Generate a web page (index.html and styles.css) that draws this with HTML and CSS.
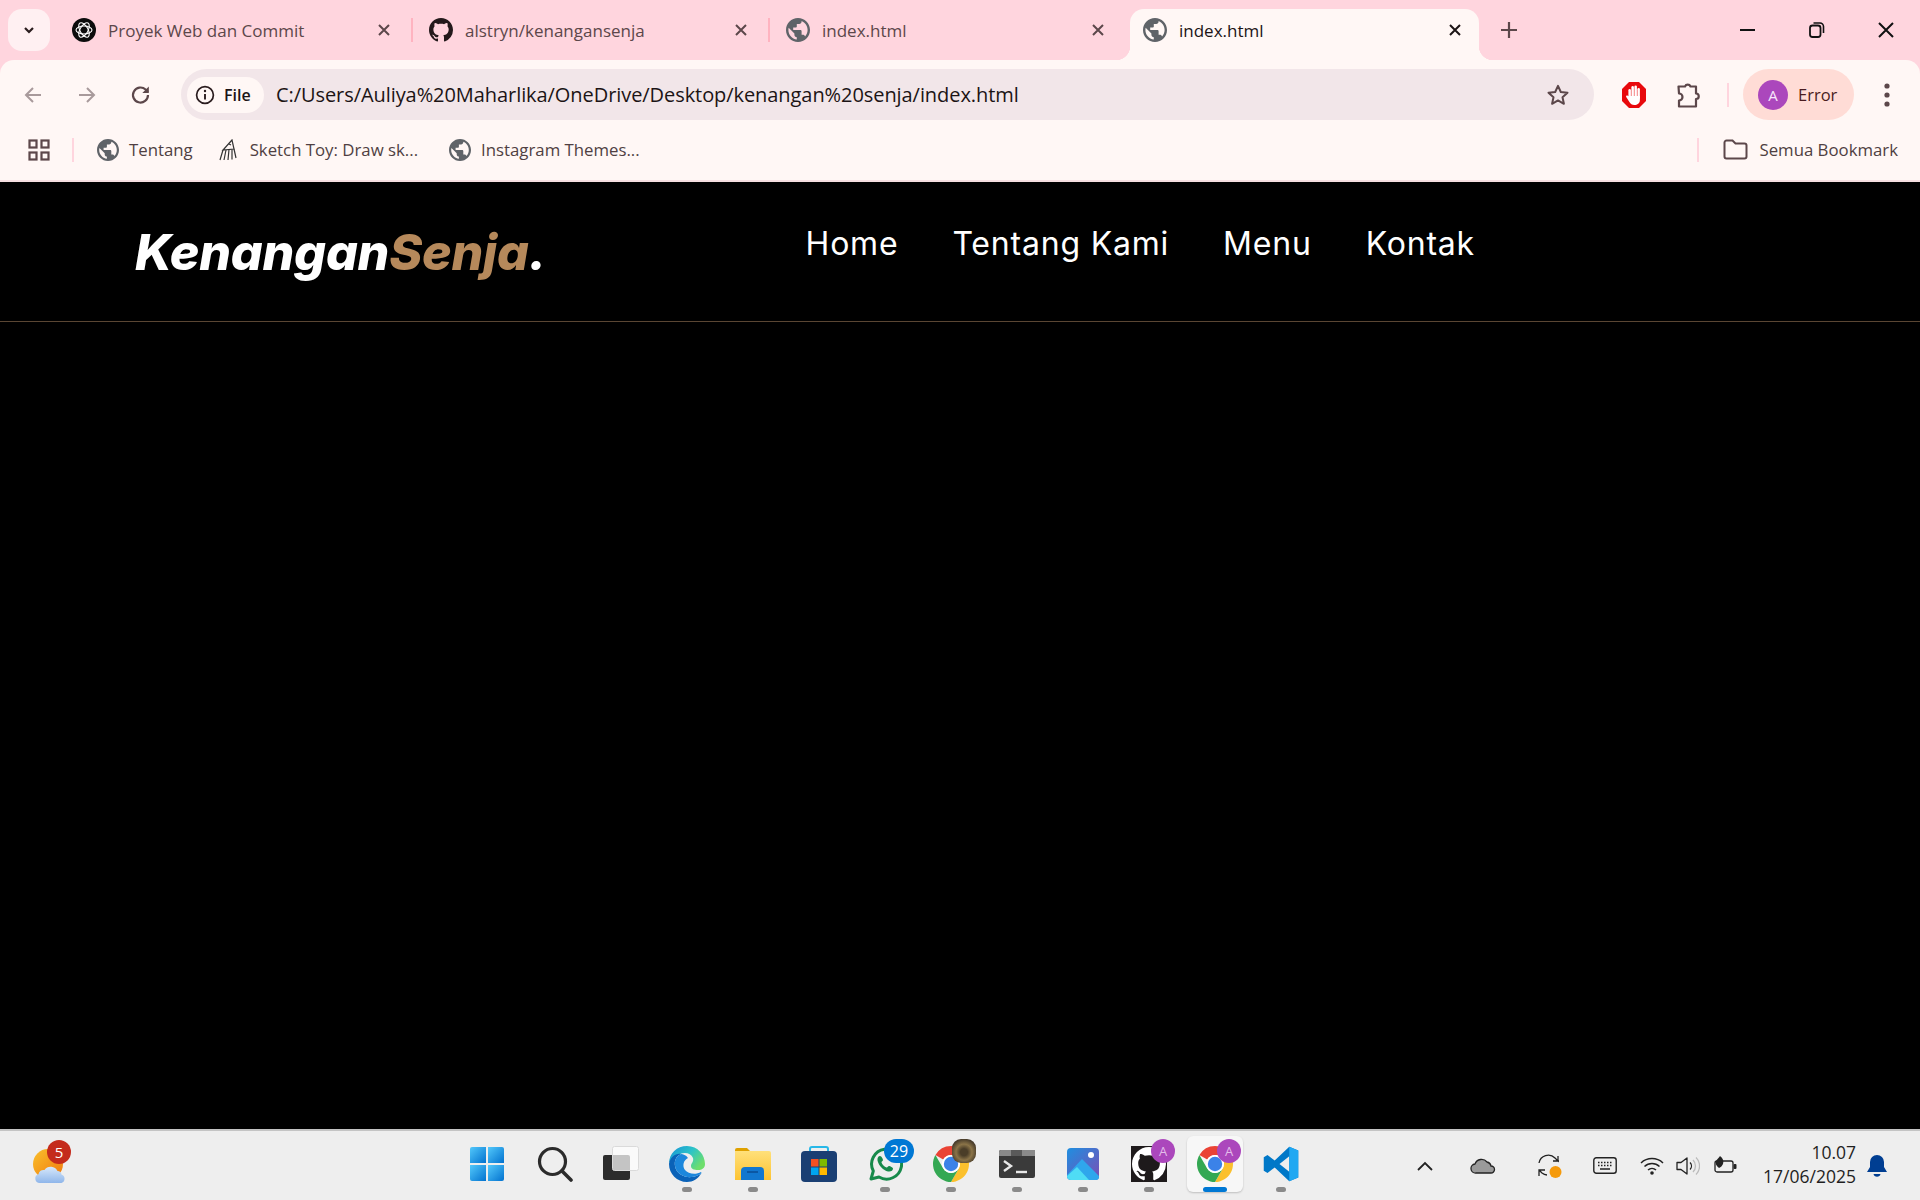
FILE: index.html
```html
<!DOCTYPE html>
<html lang="en">
<head>
  <meta charset="UTF-8">
  <title>Kenangan Senja</title>
  <link rel="stylesheet" href="styles.css">
</head>
<body>
  <svg class="defs" width="0" height="0">
    <defs>
      <symbol id="globe" viewBox="2 2 20 20"><path fill="#5f6368" d="M12 2C6.48 2 2 6.48 2 12s4.48 10 10 10 10-4.48 10-10S17.52 2 12 2zm-1 17.93c-3.95-.49-7-3.85-7-7.93 0-.62.08-1.21.21-1.79L9 15v1c0 1.1.9 2 2 2v1.93zm6.9-2.54c-.26-.81-1-1.39-1.9-1.39h-1v-3c0-.55-.45-1-1-1H8v-2h2c.55 0 1-.45 1-1V7h2c1.1 0 2-.9 2-2v-.41c2.93 1.19 5 4.06 5 7.41 0 2.08-.8 3.97-2.1 5.39z"/></symbol>
      <symbol id="octocat" viewBox="0 0 16 16"><path fill-rule="evenodd" d="M8 0C3.58 0 0 3.58 0 8c0 3.54 2.29 6.53 5.47 7.59.4.07.55-.17.55-.38 0-.19-.01-.82-.01-1.49-2.01.37-2.53-.49-2.69-.94-.09-.23-.48-.94-.82-1.13-.28-.15-.68-.52-.01-.53.63-.01 1.08.58 1.23.82.72 1.21 1.87.87 2.33.66.07-.52.28-.87.51-1.07-1.78-.2-3.64-.89-3.64-3.95 0-.87.31-1.59.82-2.15-.08-.2-.36-1.02.08-2.12 0 0 .67-.21 2.2.82.64-.18 1.32-.27 2-.27.68 0 1.36.09 2 .27 1.53-1.04 2.2-.82 2.2-.82.44 1.1.16 1.92.08 2.12.51.56.82 1.27.82 2.15 0 3.07-1.87 3.75-3.65 3.95.29.25.54.73.54 1.48 0 1.07-.01 1.93-.01 2.2 0 .21.15.46.55.38A8.013 8.013 0 0016 8c0-4.42-3.58-8-8-8z"/></symbol>
      <symbol id="closex" viewBox="0 0 14 14"><path d="M2 2l10 10M12 2L2 12" fill="none" stroke="currentColor" stroke-width="2"/></symbol>
      <symbol id="chrome" viewBox="2 2 20 20">
        <path fill="#ea4335" d="M12 2A10 10 0 0 1 20.66 7H12A5 5 0 0 0 7.67 9.5L3.34 7A10 10 0 0 1 12 2Z"/>
        <path fill="#fbc02d" d="M20.66 7A10 10 0 0 1 12 22L16.33 14.5A5 5 0 0 0 12 7Z"/>
        <path fill="#34a853" d="M12 22A10 10 0 0 1 3.34 7L7.67 14.5A5 5 0 0 0 16.33 14.5Z"/>
        <circle cx="12" cy="12" r="5" fill="#fff"/>
        <circle cx="12" cy="12" r="4" fill="#3b82e8"/>
      </symbol>
      <linearGradient id="winG" x1="0" y1="0" x2="1" y2="1"><stop offset="0" stop-color="#52c8fb"/><stop offset="1" stop-color="#0272cf"/></linearGradient>
      <linearGradient id="edgeG" x1="0" y1="0" x2="1" y2="0.6"><stop offset="0" stop-color="#1590d8"/><stop offset=".55" stop-color="#2cc3c8"/><stop offset="1" stop-color="#6ede6c"/></linearGradient>
      <linearGradient id="folderG" x1="0" y1="0" x2="0" y2="1"><stop offset="0" stop-color="#ffe07a"/><stop offset="1" stop-color="#fdc332"/></linearGradient>
      <linearGradient id="photoG" x1="0" y1="0" x2="1" y2="1"><stop offset="0" stop-color="#1f8fe0"/><stop offset="1" stop-color="#7a4db5"/></linearGradient>
      <linearGradient id="sunG" x1="0" y1="0" x2="1" y2="1"><stop offset="0" stop-color="#f9c02c"/><stop offset="1" stop-color="#f0780e"/></linearGradient>
      <linearGradient id="cloudG" x1="0" y1="0" x2="0" y2="1"><stop offset="0" stop-color="#d7e8fb"/><stop offset="1" stop-color="#8fb6ea"/></linearGradient>
    </defs>
  </svg>

  <header class="browser">
    <div class="tabstrip">
      <button class="tab-menu">
        <svg width="14" height="14" viewBox="0 0 14 14"><path d="M3 5l4 4 4-4" fill="none" stroke="#2a1c1e" stroke-width="2.2"/></svg>
      </button>
      <div class="tab">
        <svg class="favicon" viewBox="0 0 24 24">
          <circle cx="12" cy="12" r="12" fill="#0c0c0c"/>
          <g fill="none" stroke="#fff" stroke-width="1.1">
            <ellipse cx="12" cy="12" rx="8" ry="4"/>
            <ellipse cx="12" cy="12" rx="8" ry="4" transform="rotate(60 12 12)"/>
            <ellipse cx="12" cy="12" rx="8" ry="4" transform="rotate(120 12 12)"/>
          </g>
        </svg>
        <span class="tab-title">Proyek Web dan Commit</span>
        <svg class="tab-close"><use href="#closex"/></svg>
      </div>
      <span class="tab-sep"></span>
      <div class="tab">
        <svg class="favicon octo"><use href="#octocat"/></svg>
        <span class="tab-title">alstryn/kenangansenja</span>
        <svg class="tab-close"><use href="#closex"/></svg>
      </div>
      <span class="tab-sep"></span>
      <div class="tab">
        <svg class="favicon"><use href="#globe"/></svg>
        <span class="tab-title">index.html</span>
        <svg class="tab-close"><use href="#closex"/></svg>
      </div>
      <span class="tab-sep off"></span>
      <div class="tab active">
        <svg class="favicon"><use href="#globe"/></svg>
        <span class="tab-title">index.html</span>
        <svg class="tab-close"><use href="#closex"/></svg>
      </div>
      <svg class="new-tab" width="20" height="20" viewBox="0 0 20 20"><path d="M10 2v16M2 10h16" stroke="#5c474a" stroke-width="2.2"/></svg>
      <div class="win-controls">
        <svg width="18" height="18" viewBox="0 0 18 18"><path d="M1 9h15" stroke="#111" stroke-width="2"/></svg>
        <svg width="18" height="18" viewBox="0 0 18 18"><rect x="2" y="4.5" width="10.5" height="11.5" rx="2.5" fill="none" stroke="#111" stroke-width="1.8"/><path d="M5.5 2h6.5a3.5 3.5 0 0 1 3.5 3.5V12" fill="none" stroke="#111" stroke-width="1.6"/></svg>
        <svg width="18" height="18" viewBox="0 0 18 18"><path d="M2 2l14 14M16 2L2 16" stroke="#111" stroke-width="2"/></svg>
      </div>
    </div>

    <div class="toolbar">
      <div class="slot"><svg width="20" height="20" viewBox="0 0 20 20"><path d="M18 10H3M10 3l-7 7 7 7" fill="none" stroke="#a89a9b" stroke-width="2"/></svg></div>
      <div class="slot"><svg width="20" height="20" viewBox="0 0 20 20"><path d="M2 10h15M10 3l7 7-7 7" fill="none" stroke="#a89a9b" stroke-width="2"/></svg></div>
      <div class="slot"><svg width="22" height="22" viewBox="0 0 22 22"><path d="M18 11a7.5 7.5 0 1 1-2.4-5.5L18 8" fill="none" stroke="#5c474a" stroke-width="2.2"/><path d="M18.8 2.5V9h-6.5z" fill="#5c474a"/></svg></div>
      <div class="omnibox">
        <div class="chip">
          <svg width="20" height="20" viewBox="0 0 20 20"><circle cx="10" cy="10" r="8.4" fill="none" stroke="#2a1c1e" stroke-width="1.7"/><path d="M10 9v5.5" stroke="#2a1c1e" stroke-width="1.9"/><circle cx="10" cy="6" r="1.2" fill="#2a1c1e"/></svg>
          <span>File</span>
        </div>
        <span class="url">C:/Users/Auliya%20Maharlika/OneDrive/Desktop/kenangan%20senja/index.html</span>
        <svg class="star" width="24" height="24" viewBox="0 0 24 24"><path d="M12 2.8l2.8 6.2 6.7.7-5 4.5 1.4 6.6-5.9-3.4-5.9 3.4 1.4-6.6-5-4.5 6.7-.7z" fill="none" stroke="#5c474a" stroke-width="2" stroke-linejoin="round"/></svg>
      </div>
      <div class="slot first">
        <svg width="26" height="28" viewBox="0 0 26 28">
          <path d="M8 1h10l7 7v12l-7 7H8l-7-7V8z" fill="#e8090c"/>
          <g fill="#fff">
            <rect x="7.400" y="8" width="2.500" height="10" rx="1.250"/>
            <rect x="10.400" y="5" width="2.500" height="12" rx="1.250"/>
            <rect x="13.400" y="4.500" width="2.500" height="12" rx="1.250"/>
            <rect x="16.400" y="7" width="2.500" height="11" rx="1.250"/>
            <path d="M7.400 15h11.500v4c0 3.500-2.500 5-5.500 5-2.500 0-3.800-1-5-3l-3.200-5c-.6-1.100.9-2 1.800-1l.4.500z"/>
          </g>
        </svg>
      </div>
      <div class="slot">
        <svg width="24" height="28" viewBox="0 0 24 28"><path d="M2.500 5.500H9a3 3 0 0 1 5.500 0h5.500v7a2.600 2.600 0 0 1 0 5.500v7.500H3v-6a3.500 3.500 0 0 0 0-7z" fill="none" stroke="#5c474a" stroke-width="2.200" stroke-linejoin="round"/></svg>
      </div>
      <span class="tool-sep"></span>
      <div class="profile">
        <span class="avatar">A</span>
        <span class="profile-name">Error</span>
      </div>
      <div class="slot menu-dots">
        <svg width="6" height="26" viewBox="0 0 6 26"><circle cx="3" cy="4" r="2.600" fill="#5c474a"/><circle cx="3" cy="13" r="2.600" fill="#5c474a"/><circle cx="3" cy="22" r="2.600" fill="#5c474a"/></svg>
      </div>
    </div>

    <div class="bookmarks">
      <svg class="apps" width="22" height="22" viewBox="0 0 22 22"><g fill="none" stroke="#5c474a" stroke-width="2.200"><rect x="1.500" y="1.500" width="7" height="7"/><rect x="13.500" y="1.500" width="7" height="7"/><rect x="1.500" y="13.500" width="7" height="7"/><rect x="13.500" y="13.500" width="7" height="7"/></g></svg>
      <span class="bm-sep"></span>
      <a class="bm"><svg class="bm-icon"><use href="#globe"/></svg><span>Tentang</span></a>
      <a class="bm"><svg class="bm-icon" viewBox="0 0 22 22"><g fill="none" stroke="#333" stroke-width="1.200"><path d="M14 1l-9 10 11-1z"/><path d="M11 5l2 1"/><path d="M5 11l-3 10M8 11l-2 10M11 10.500l-1 10.500M14 10.500l0 10M16 10l2 9"/></g></svg><span>Sketch Toy: Draw sk...</span></a>
      <a class="bm"><svg class="bm-icon"><use href="#globe"/></svg><span>Instagram Themes...</span></a>
      <span class="bm-sep right"></span>
      <a class="bm all"><svg width="25" height="21" viewBox="0 0 25 21"><path d="M1.500 3.500a2 2 0 0 1 2-2h6l3 3h9a2 2 0 0 1 2 2v11a2 2 0 0 1-2 2h-18a2 2 0 0 1-2-2z" fill="none" stroke="#5c474a" stroke-width="2"/></svg><span>Semua Bookmark</span></a>
    </div>
  </header>

  <main class="page">
    <nav class="navbar">
      <a class="navbar-logo">Kenangan<span>Senja</span>.</a>
      <div class="navbar-nav">
        <a>Home</a>
        <a>Tentang Kami</a>
        <a>Menu</a>
        <a>Kontak</a>
      </div>
    </nav>
  </main>

  <footer class="taskbar">
    <div class="widgets">
      <div class="weather">
        <svg width="40" height="40" viewBox="0 0 40 40">
          <circle cx="18" cy="18" r="15" fill="url(#sunG)"/>
          <path d="M10 37a4.500 4.500 0 0 1-1.500-8.800 5 5 0 0 1 6-4.200 7.500 7.500 0 0 1 13 1 4 4 0 0 1 4 3.500 4.500 4.500 0 0 1 0 8.500z" fill="url(#cloudG)"/>
        </svg>
        <span class="badge red">5</span>
      </div>
    </div>
    <div class="apps-row">
      <div class="app start">
        <svg width="36" height="36" viewBox="0 0 36 36"><g fill="url(#winG)"><path d="M1 3a2 2 0 0 1 2-2h14v16H1z"/><path d="M19 1h14a2 2 0 0 1 2 2v14H19z"/><path d="M1 19h16v16H3a2 2 0 0 1-2-2z"/><path d="M19 19h16v14a2 2 0 0 1-2 2H19z"/></g></svg>
      </div>
      <div class="app">
        <svg width="36" height="36" viewBox="0 0 36 36"><circle cx="15.500" cy="15.500" r="13" fill="none" stroke="#2b2b2b" stroke-width="3.200"/><path d="M25 25l9 9" stroke="#2b2b2b" stroke-width="3.600" stroke-linecap="round"/></svg>
      </div>
      <div class="app">
        <svg width="36" height="36" viewBox="0 0 36 36"><rect x="0" y="9" width="27" height="25" rx="2" fill="#2c2c2c"/><rect x="9.500" y="0.500" width="26" height="24" rx="2" fill="#fff" fill-opacity=".72" stroke="#dadada"/></svg>
      </div>
      <div class="app running">
        <svg width="38" height="38" viewBox="0 0 38 38">
          <path d="M1 19C1 8 9 1 19 1C30 1 37 10 37 19C37 23 34 25 30 25C26 25 23 24 23 21C23 18 26 17 25 13C23 8 17 7 12 9C6 12 2 15 1 19Z" fill="url(#edgeG)"/>
          <path d="M1 19C2 12 8 8 13 9C8 11 6 16 7 21C8 29 17 33 24 32C28 31.500 31 30 33.500 28C30 34 25 37 19 37C9 37 1 29 1 19Z" fill="#0a62b8"/>
          <path d="M13 9C8 11 6 16 7 21C8 29 17 33 24 32C28 31.500 31 30 33.500 28L33 27C28 30 20 29 17 25C14 21 15.500 15 20 13C18 10 15 9 13 9Z" fill="#1c87dc"/>
        </svg>
      </div>
      <div class="app running">
        <svg width="36" height="34" viewBox="0 0 36 34">
          <path d="M0 3a2 2 0 0 1 2-2h10l3 3H0z" fill="#dfa100"/>
          <path d="M0 4h34a2 2 0 0 1 2 2v27H0z" fill="url(#folderG)"/>
          <path d="M6 33v-9a4 4 0 0 1 4-4h15a4 4 0 0 1 4 4v9z" fill="#1277cf"/>
          <path d="M12 25h11" stroke="#0a4f98" stroke-width="1.600"/>
        </svg>
      </div>
      <div class="app">
        <svg width="36" height="36" viewBox="0 0 36 36">
          <path d="M9 7V3a2 2 0 0 1 2-2h14a2 2 0 0 1 2 2v4" fill="none" stroke="#27b8e8" stroke-width="2"/>
          <rect x="0" y="5" width="36" height="31" rx="4" fill="#1a3f73"/>
          <rect x="10" y="13" width="7.500" height="7.500" fill="#f25022"/>
          <rect x="18.500" y="13" width="7.500" height="7.500" fill="#7fba00"/>
          <rect x="10" y="21.500" width="7.500" height="7.500" fill="#00a4ef"/>
          <rect x="18.500" y="21.500" width="7.500" height="7.500" fill="#ffb900"/>
        </svg>
      </div>
      <div class="app running">
        <svg width="36" height="36" viewBox="0 0 36 36">
          <path d="M4 33l2.300-8A15 15 0 1 1 12 31z" fill="none" stroke="#178a4b" stroke-width="3" stroke-linejoin="round"/>
          <path d="M13 10c-1.500 0-3 2-2.500 4.500 1 5 6 10 10.500 11 3 .5 5-1 5-3 0-1-3-2.500-4-2.500-1 0-1.500 1.700-2.500 1.500-2-.5-4.500-3-5-5-.2-1 1.500-1.500 1.500-2.500 0-1-1.500-4-3-4z" fill="#178a4b"/>
        </svg>
        <span class="badge blue">29</span>
      </div>
      <div class="app running">
        <svg class="chrome-icon"><use href="#chrome"/></svg>
        <span class="badge photo"></span>
      </div>
      <div class="app running">
        <svg width="36" height="28" viewBox="0 0 36 28">
          <rect width="36" height="28" rx="2" fill="#3a3a3a"/>
          <path d="M0 2a2 2 0 0 1 2-2h34v6H0z" fill="#8a8a8a"/>
          <path d="M12 0h11v6H12z" fill="#5a5a5a"/>
          <path d="M5 11l7 5-7 5" fill="none" stroke="#e8e8e8" stroke-width="2.400"/>
          <path d="M17 22h11" stroke="#e8e8e8" stroke-width="2.400"/>
        </svg>
      </div>
      <div class="app running">
        <svg width="32" height="32" viewBox="0 0 32 32">
          <rect width="32" height="32" rx="4" fill="url(#photoG)"/>
          <circle cx="24" cy="7" r="3" fill="#fff"/>
          <path d="M0 27L15 11l17 17v1a3 3 0 0 1-3 3H5a5 5 0 0 1-5-5z" fill="#2fa6ec"/>
          <path d="M0 28l10-9 12 13H4a4 4 0 0 1-4-4z" fill="#4fdcf5"/>
        </svg>
      </div>
      <div class="app running">
        <span class="gh-tile"><svg class="gh-cat"><use href="#octocat"/></svg></span>
        <span class="badge avatar-badge">A</span>
      </div>
      <div class="app active">
        <svg class="chrome-icon"><use href="#chrome"/></svg>
        <span class="badge avatar-badge">A</span>
      </div>
      <div class="app running">
        <svg width="36" height="36" viewBox="0 0 24 24">
          <path fill-rule="evenodd" fill="#0078c8" d="M17.500 .5L23.500 3V21L17.500 23.500 7.800 14.300 3 18 .5 16.500V7.500L3 6 7.800 9.700ZM17.500 6.800L11 12 17.500 17.200Z"/>
          <path d="M17.500 .5L23.500 3V21L17.500 23.500Z" fill="#20a8f2"/>
        </svg>
      </div>
    </div>
    <div class="tray">
      <svg class="tray-item chevron" width="16" height="10" viewBox="0 0 16 10"><path d="M1 9l7-7 7 7" fill="none" stroke="#222" stroke-width="1.800"/></svg>
      <svg class="tray-item cloud" width="26" height="16" viewBox="0 0 26 16"><path d="M6 15a4.500 4.500 0 0 1-1-9 7 7 0 0 1 12-2 5 5 0 0 1 4 4 3.500 3.500 0 0 1 0 7z" fill="#9a9a9a" stroke="#222" stroke-width="1.300"/></svg>
      <span class="tray-item sync">
        <svg width="26" height="26" viewBox="0 0 26 26"><path d="M3 10a9.500 9.500 0 0 1 16-5l3 3V3M23 8h-6M3 17l3 3a9 9 0 0 0 5 2M3 23v-6h6" fill="none" stroke="#222" stroke-width="1.300"/><circle cx="19.500" cy="19" r="6" fill="#f59a0c"/></svg>
      </span>
      <svg class="tray-item keyboard" width="24" height="17" viewBox="0 0 24 17"><rect x=".8" y=".8" width="22.400" height="15.400" rx="2.500" fill="none" stroke="#222" stroke-width="1.400"/><path d="M5 5.500h14M5 8.500h14" stroke="#222" stroke-width="1.500" stroke-dasharray="1.500 1.500"/><path d="M7 12h10" stroke="#222" stroke-width="1.500"/></svg>
      <svg class="tray-item wifi" width="24" height="18" viewBox="0 0 24 18"><g fill="none" stroke="#222" stroke-width="1.500"><path d="M1 6a16 16 0 0 1 22 0"/><path d="M4.500 9.500a11 11 0 0 1 15 0"/><path d="M8 13a6 6 0 0 1 8 0"/></g><circle cx="12" cy="16" r="1.800" fill="#222"/></svg>
      <svg class="tray-item speaker" width="24" height="22" viewBox="0 0 24 22"><path d="M1 7.500h4L11 3v16l-6-4.500H1z" fill="none" stroke="#222" stroke-width="1.300" stroke-linejoin="round"/><path d="M14 7.500a5 5 0 0 1 0 7" fill="none" stroke="#222" stroke-width="1.300"/><path d="M17 5a8.500 8.500 0 0 1 0 12M20 2.500a12 12 0 0 1 0 17" fill="none" stroke="#bbb" stroke-width="1.300"/></svg>
      <svg class="tray-item battery" width="24" height="20" viewBox="0 0 24 20"><rect x="2" y="5" width="18" height="11" rx="2" fill="none" stroke="#222" stroke-width="1.300"/><rect x="20.500" y="8" width="3" height="5" rx="1" fill="#222"/><path d="M7 0c3 2 4 5 3 8-1 2-2 3-4 4-3-2-4-5-3-7 1-2 3-3 4-5z" fill="#222"/></svg>
      <div class="clock"><div>10.07</div><div>17/06/2025</div></div>
      <svg class="bell" width="20" height="24" viewBox="0 0 20 24"><path d="M10 1a7 7 0 0 1 7 7v5l3 5H0l3-5V8a7 7 0 0 1 7-7z" fill="#003e92"/><path d="M6.500 20a3.600 3.600 0 0 0 7 0z" fill="#003e92"/></svg>
    </div>
  </footer>
</body>
</html>
```

FILE: styles.css
```css
* { box-sizing: border-box; }

body {
  margin: 0;
  height: 100vh;
  display: flex;
  flex-direction: column;
  overflow: hidden;
  background: #000;
  font-family: "Open Sans", "Noto Sans", sans-serif;
}
.defs { position: absolute; }

/* browser chrome */
.browser { background: #ffd5de; flex: none; }
.tabstrip {
  height: 60px;
  display: flex;
  align-items: flex-end;
  padding-left: 8px;
}
.tab-menu {
  width: 42px;
  height: 42px;
  margin: 0 9px 9px 0;
  border: none;
  border-radius: 14px;
  background: #fff0f2;
  display: flex;
  align-items: center;
  justify-content: center;
  padding: 0;
}
.tab {
  width: 349px;
  height: 51px;
  padding: 0 17px 9px 13px;
  display: flex;
  align-items: center;
  color: #5c474a;
  position: relative;
}
.tab.active {
  background: #fff7f5;
  border-radius: 14px 14px 0 0;
  color: #1c1415;
}
.tab.active::before,
.tab.active::after {
  content: "";
  position: absolute;
  bottom: 0;
  width: 14px;
  height: 14px;
}
.tab.active::before {
  left: -14px;
  background: radial-gradient(circle at 0 0, transparent 14px, #fff7f5 14.5px);
}
.tab.active::after {
  right: -14px;
  background: radial-gradient(circle at 100% 0, transparent 14px, #fff7f5 14.5px);
}
.favicon { width: 24px; height: 24px; flex: none; }
.octo { fill: #24191b; }
.tab-title {
  margin-left: 12px;
  font-size: 17px;
  white-space: nowrap;
  flex: 1;
}
.tab-close { width: 14px; height: 14px; flex: none; }
.tab-sep {
  width: 2px;
  height: 24px;
  margin: 0 3px 18px;
  background: #ffb3c0;
}
.tab-sep.off { background: transparent; }
.new-tab { margin: 0 0 20px 20px; }
.win-controls {
  margin: 0 25px 21px auto;
  display: flex;
  gap: 51px;
}

.toolbar {
  height: 60px;
  padding: 9px 0 0 6px;
  display: flex;
  background: #fff7f5;
  border-radius: 14px 14px 0 0;
}
.slot {
  width: 54px;
  display: flex;
  align-items: center;
  justify-content: center;
  flex: none;
}
.slot.first { margin-left: 13px; }
.omnibox {
  width: 1413px;
  margin-left: 13px;
  padding-left: 6px;
  border-radius: 26px;
  background: #f2e6e9;
  display: flex;
  align-items: center;
  flex: none;
}
.chip {
  width: 77px;
  height: 36px;
  padding-left: 8px;
  border-radius: 18px;
  background: #fff7f5;
  display: flex;
  align-items: center;
  gap: 9px;
  font-size: 16px;
  font-weight: 600;
  color: #1c1415;
}
.url {
  margin-left: 12px;
  font-size: 20px;
  letter-spacing: -.07px;
  color: #1c1415;
  white-space: nowrap;
}
.star { margin: 0 24px 0 auto; }
.tool-sep {
  width: 2px;
  height: 24px;
  margin: 14px 0 0 12px;
  background: #ffd5de;
}
.profile {
  width: 111px;
  margin-left: 14px;
  padding-left: 15px;
  border-radius: 26px;
  background: #ffdcd6;
  display: flex;
  align-items: center;
  gap: 10px;
  font-size: 16.5px;
  color: #4a1c20;
}
.avatar {
  width: 30px;
  height: 30px;
  border-radius: 50%;
  background: #ab47bc;
  color: #f8e6fb;
  font-size: 15px;
  display: flex;
  align-items: center;
  justify-content: center;
}
.menu-dots { margin-left: 6px; }

.bookmarks {
  height: 62px;
  padding: 0 22px 1px 29px;
  display: flex;
  align-items: center;
  background: #fff7f5;
  border-bottom: 2px solid #f6dfe1;
  font-size: 16.8px;
  color: #4f3f42;
}
.apps { flex: none; margin-left: -1px; }
.bm-sep {
  width: 2px;
  height: 24px;
  margin: 0 23px 0 22px;
  background: #ffd5de;
}
.bm-sep.right { margin: 0 24px 0 auto; }
.bm {
  display: flex;
  align-items: center;
  gap: 10px;
  margin-right: 25px;
  white-space: nowrap;
}
.bm + .bm + .bm { margin-left: 6px; }
.bm.all { margin: 0; gap: 11px; }
.bm-icon { width: 22px; height: 22px; flex: none; }

/* the page itself */
.page { flex: 1; background: #000; }
.navbar {
  height: 140px;
  padding-left: 135px;
  display: flex;
  align-items: flex-start;
  border-bottom: 1px solid #5a4633;
}
.navbar-logo {
  margin-top: 40px;
  font-family: Inter, sans-serif;
  font-size: 50px;
  font-weight: 800;
  font-style: italic;
  letter-spacing: -.2px;
  color: #fff;
  white-space: nowrap;
}
.navbar-logo span { color: #b6895b; }
.navbar-nav {
  margin: 42px 0 0 auto;
  padding-right: 445px;
  display: flex;
  gap: 54px;
  font-family: Inter, sans-serif;
  font-size: 32px;
  letter-spacing: .8px;
  color: #fff;
  white-space: nowrap;
}

/* windows taskbar */
.taskbar {
  height: 71px;
  flex: none;
  display: flex;
  align-items: center;
  background: #eeeeee;
  border-top: 2px solid #c4c4c4;
}
.widgets { width: 456px; padding-left: 30px; flex: none; }
.weather { position: relative; width: 40px; height: 40px; }
.apps-row { display: flex; margin-top: -4px; }
.app {
  width: 66px;
  height: 56px;
  display: flex;
  align-items: center;
  justify-content: center;
  position: relative;
}
.app.start svg { margin-left: -4px; }
.app.running::after,
.app.active::after {
  content: "";
  position: absolute;
  bottom: 0;
  left: 28px;
  width: 10px;
  height: 5px;
  border-radius: 3px;
  background: #8a8a8a;
}
.app.active {
  width: 56px;
  margin: 0 5px;
  border-radius: 6px;
  background: #f7f7f7;
  box-shadow: 0 1px 2px rgba(0,0,0,.2);
}
.app.active::after { left: 16px; width: 24px; background: #0078d4; }
.chrome-icon { width: 36px; height: 36px; }
.gh-tile {
  width: 36px;
  height: 36px;
  background: #1e1a1b;
  display: flex;
  align-items: center;
  justify-content: center;
}
.gh-cat { width: 34px; height: 34px; fill: #fff; }
.badge {
  position: absolute;
  width: 24px;
  height: 24px;
  top: 3px;
  left: 35px;
  border-radius: 50%;
  color: #fff;
  font-size: 14px;
  display: flex;
  align-items: center;
  justify-content: center;
}
.badge.red { top: -6px; left: 17px; background: #c42b1c; font-size: 15px; }
.badge.blue {
  width: 30px;
  left: 32px;
  border-radius: 12px;
  background: #0078d4;
  font-size: 16px;
}
.badge.photo {
  left: 34px;
  border-radius: 9px;
  background: radial-gradient(circle at 50% 55%, #4a3d28 0 20%, #8b7448 45%, #3a3024 80%);
}
.badge.avatar-badge { background: #ab47bc; color: #e3bdea; font-size: 13px; }
.app.active .badge { left: 30px; }

.tray {
  flex: 1;
  display: flex;
  align-items: center;
  height: 100%;
  padding-left: 103px;
}
.tray-item { flex: none; }
.chevron { margin-right: 37px; }
.cloud { margin-right: 40px; }
.sync { width: 26px; height: 26px; margin-right: 31px; }
.keyboard { margin-right: 23px; }
.wifi { margin-right: 12px; }
.speaker { margin-right: 13px; }
.battery { margin-right: 16px; }
.clock {
  width: 103px;
  margin-top: -3px;
  text-align: right;
  font-size: 17.5px;
  line-height: 24px;
  color: #1f1f1f;
}
.bell { margin-left: 11px; flex: none; }
```
